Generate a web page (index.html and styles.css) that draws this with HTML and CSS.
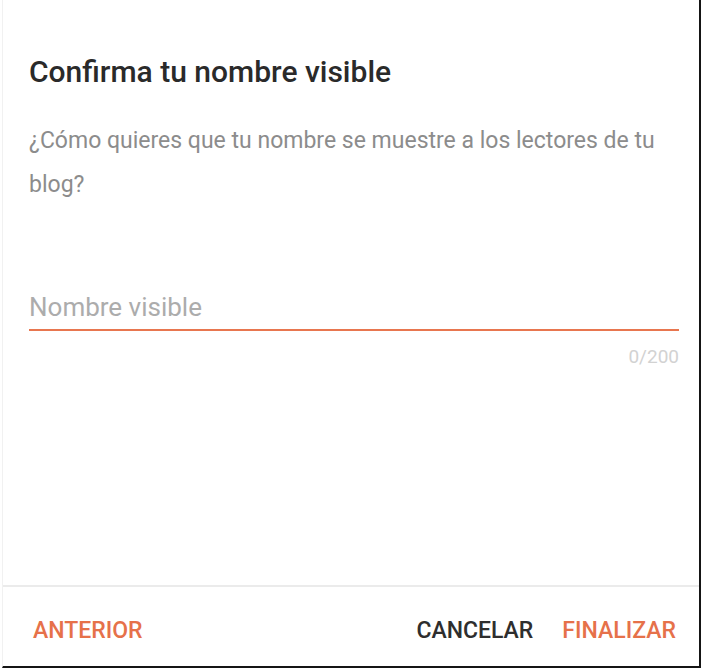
FILE: index.html
```html
<!DOCTYPE html>
<html lang="es">
<head>
<meta charset="utf-8">
<title>Confirma tu nombre visible</title>
<link rel="stylesheet" href="styles.css">
</head>
<body>
<div class="dialog">
  <div class="content">
    <h1 class="title">Confirma tu nombre visible</h1>
    <p class="desc">¿Cómo quieres que tu nombre se muestre a los lectores de tu blog?</p>
    <div class="field">
      <span class="placeholder">Nombre visible</span>
    </div>
    <div class="counter">0/200</div>
  </div>
  <div class="footer">
    <span class="btn accent">ANTERIOR</span>
    <span class="spacer"></span>
    <span class="btn dark">CANCELAR</span>
    <span class="btn accent">FINALIZAR</span>
  </div>
</div>
</body>
</html>
```
FILE: styles.css
```css
* { box-sizing: border-box; }
html, body { margin: 0; padding: 0; background: #fff; }
body { font-family: Roboto, "Liberation Sans", sans-serif; }
.dialog {
  width: 699px;
  height: 668px;
  margin-left: 2px;
  display: flex;
  flex-direction: column;
  border-right: 2px solid #151515;
  border-bottom: 2px solid #151515;
  border-left: 1px solid #f1f1f1;
}
.content {
  flex: 1;
  padding: 54px 20px 0 26px;
}
.title {
  margin: 0;
  font-size: 30px;
  line-height: 36px;
  font-weight: 500;
  color: #2a2a2a;
}
.desc {
  margin: 29px 0 0;
  font-size: 23px;
  line-height: 44px;
  color: #8c8c8c;
}
.field {
  margin-top: 84px;
  padding-bottom: 6px;
  border-bottom: 2px solid #e8764f;
}
.placeholder {
  display: block;
  font-size: 26px;
  line-height: 32px;
  color: #acacac;
}
.counter {
  margin-top: 14px;
  text-align: right;
  font-size: 19px;
  line-height: 24px;
  color: #d2d2d2;
}
.footer {
  height: 81px;
  border-top: 2px solid #ebebeb;
  display: flex;
  align-items: center;
  padding: 9px 23px 0 30px;
  gap: 29px;
}
.spacer { flex: 1; }
.btn {
  font-size: 23px;
  font-weight: 500;
  line-height: 28px;
}
.accent { color: #e6714a; }
.dark { color: #2e2e2e; }
```
